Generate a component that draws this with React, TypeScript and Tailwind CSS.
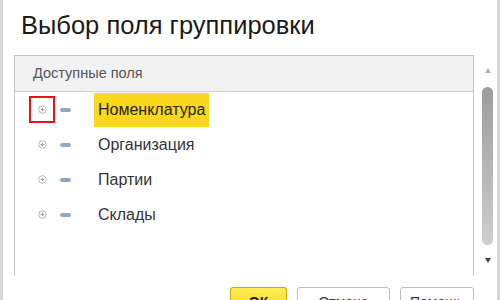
import { Fragment } from 'react';

const fields = ['Номенклатура', 'Организация', 'Партии', 'Склады'];

function PlusCircle() {
  return (
    <svg width="9" height="9" viewBox="0 0 9 9" className="shrink-0">
      <circle cx="4.5" cy="4.5" r="3.8" fill="white" stroke="#b5b5b5" strokeWidth="1" />
      <path d="M2.7 4.5h3.6M4.5 2.7v3.6" stroke="#9a9a9a" strokeWidth="1" />
    </svg>
  );
}

export default function App() {
  return (
    <div className="w-[500px] h-[300px] flex bg-white overflow-hidden font-['Liberation_Sans',Arial,sans-serif]">
      <div className="w-[3px] shrink-0 bg-[#d6d6d6]" />
      <div className="flex-1 flex flex-col">
        <h1 className="shrink-0 pl-[18px] pt-[10px] h-[55px] text-[25.5px] leading-[30px] text-[#1a1a1a]">
          Выбор поля группировки
        </h1>
        <div className="flex shrink-0">
          <div className="ml-[11px] w-[460px] h-[221px] border-l border-t border-r border-[#c4c4c4]">
            <div className="h-[36px] bg-[#f2f2f2] border-b border-[#cfcfcf] flex items-center pl-[18px] text-[14.5px] text-[#555]">
              Доступные поля
            </div>
            {fields.map((name, i) => (
              <Fragment key={name}>
                <div className="h-[35px] flex items-center">
                  <div className="w-[40px] flex justify-end">
                    <div
                      className={
                        i === 0
                          ? 'w-[26px] h-[27px] border-2 border-[#e3141c] flex items-center justify-center'
                          : 'w-[26px] h-[27px] flex items-center justify-center'
                      }
                    >
                      <PlusCircle />
                    </div>
                  </div>
                  <div className="ml-[5px] w-[11px] h-[4px] rounded-full bg-[#8ea8c4]" />
                  <div
                    className={
                      i === 0
                        ? 'ml-[23px] self-end h-[34px] px-[4px] flex items-center bg-[#fbd81c] text-[16px] text-[#222]'
                        : 'ml-[23px] px-[4px] text-[16px] text-[#333]'
                    }
                  >
                    {name}
                  </div>
                </div>
              </Fragment>
            ))}
          </div>
          <div className="w-[23px] h-[221px] flex flex-col items-center">
            <div className="mt-[13px] ml-[4px] w-0 h-0 border-l-[3px] border-r-[3px] border-b-[5px] border-l-transparent border-r-transparent border-b-[#b0b0b0]" />
            <div className="mt-[14px] ml-[4px] w-[11px] h-[158px] rounded-full bg-gradient-to-b from-[#9c9c9c] to-[#cfcfcf]" />
            <div className="mt-[13px] ml-[4px] w-0 h-0 border-l-[3px] border-r-[3px] border-t-[5px] border-l-transparent border-r-transparent border-t-[#444]" />
          </div>
        </div>
        <div className="flex shrink-0 mt-[11px] gap-[10px] pl-[227px]">
          <button className="w-[57px] h-[26px] rounded-[3px] border border-[#c9a800] bg-gradient-to-b from-[#ffee55] to-[#f5d300] text-[14px] leading-[16px] font-bold text-[#222] pt-[6px] flex justify-center items-start">
            ОК
          </button>
          <button className="w-[93px] h-[26px] rounded-[3px] border border-[#bdbdbd] bg-white text-[14px] leading-[16px] text-[#333] pt-[6px] flex justify-center items-start">
            Отмена
          </button>
          <button className="w-[74px] h-[26px] rounded-[3px] border border-[#bdbdbd] bg-white text-[14px] leading-[16px] text-[#333] pt-[6px] flex justify-center items-start">
            Помощь
          </button>
        </div>
      </div>
      <div className="w-[3px] shrink-0 bg-[#d6d6d6]" />
    </div>
  );
}
